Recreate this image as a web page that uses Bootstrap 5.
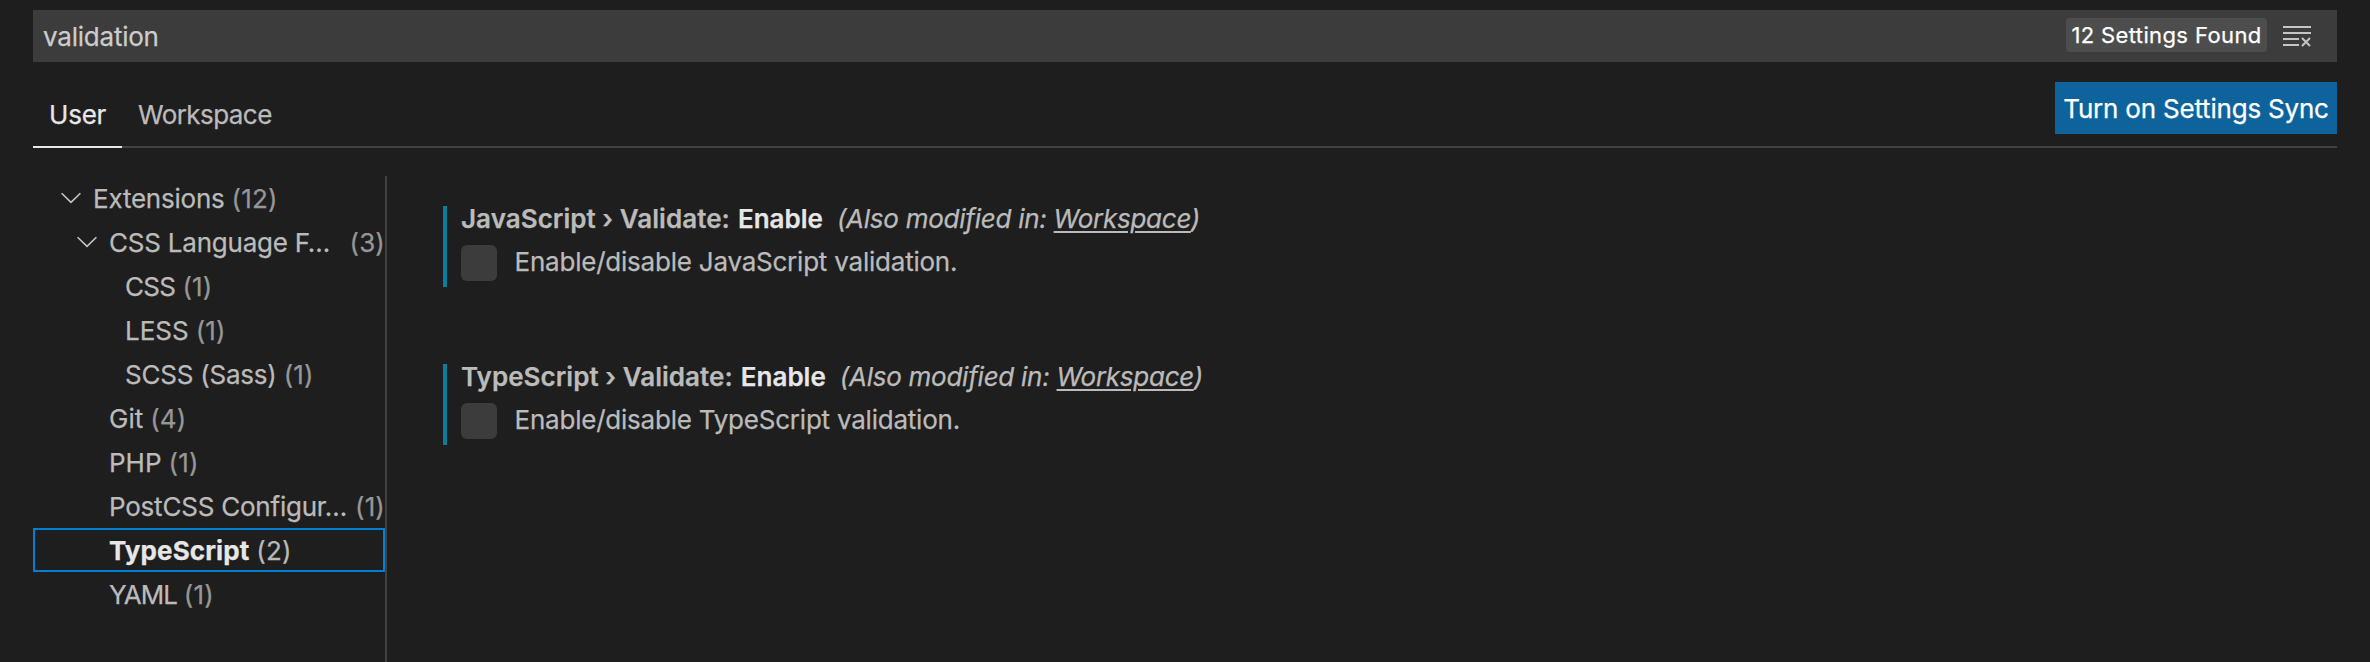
<!DOCTYPE html>
<html lang="en" data-bs-theme="dark">
<head>
<meta charset="utf-8">
<meta name="viewport" content="width=device-width, initial-scale=1">
<title>Settings</title>
<link href="https://cdn.jsdelivr.net/npm/bootstrap@5.3.0/dist/css/bootstrap.min.css" rel="stylesheet">
<style>
html,body{height:100%}
body{background:#1e1e1e;color:#bbb;font:26px/44px Inter,"Liberation Sans",sans-serif;letter-spacing:-.22px;overflow:hidden;-webkit-text-stroke:.25px currentColor}
.editor-page{padding:10px 33px 0}
.search-bar{height:52px;background:#3c3c3c;color:#ccc;padding:0 26px 0 10px}
.query{padding-top:2px}
.found-badge{height:34px;width:201px;margin:-2px 16px 0 0;background:#4d4d4d;color:#fff;border-radius:4px;font-size:22px;line-height:34px;letter-spacing:.38px}
.scope-row{height:86px;border-bottom:2px solid #414141}
.scope-tab{height:86px;line-height:44px;padding-top:31px;color:#bbb}
.scope-tab.active{color:#e7e7e7;width:89px;padding-left:16px;border-bottom:2px solid #e7e7e7}
.scope-tab.other{padding-left:16px;letter-spacing:-.57px}
.sync-btn{height:52px;width:282px;margin-top:20px;background:#0e639c;color:#fff;border-radius:0;padding:2px 0 0;font-size:26px;line-height:50px;border:0;letter-spacing:-.2px}
.sync-btn:hover{background:#1177bb;color:#fff}
.settings-body{height:514px}
.toc{width:354px;margin-top:28px;border-right:2px solid #414141}
.toc-row{height:44px;line-height:46px;padding-left:76px;white-space:nowrap}
.toc-row.root{padding-left:27px}
.toc-row.branch{padding-left:43px}
.toc-row.leaf{padding-left:92px}
.toc-row.selected{outline:2px solid #007fd4;outline-offset:-2px;color:#e7e7e7}
.toc-row.selected .toc-name{font-weight:700;letter-spacing:.1px}
.toc-count{margin-left:7px;color:#979797;letter-spacing:.15px}
.toc-row.selected .toc-count{color:#b9b9b9}
.toc-row.root .toc-name,.toc-row.root .toc-count,.toc-row.branch .toc-name,.toc-row.branch .toc-count{padding-top:2px}
.caps{letter-spacing:-.65px}
.caps-wide{letter-spacing:-1px}
.toc-name.short{letter-spacing:0}
.chev{width:22px;height:12px;margin:-1px 11px 0 0}
.setting-list{padding:58px 0 0 56px}
.setting{height:81px;margin-bottom:77px;border-left:4px solid #0c7d9d;padding-left:14px}
.setting-title{height:39px;line-height:26px;white-space:pre}
.setting-title b{font-weight:600;letter-spacing:.04px}
.setting-title b + b{color:#e7e7e7;margin-left:8px;letter-spacing:0}
.setting-title em{margin-left:14px;letter-spacing:-.26px}
.setting-title u{text-decoration-thickness:2px;text-underline-offset:3px}
.check-box{width:36px;height:36px;border-radius:6px;background:#3c3c3c;border:0;margin:0}
.setting-text{margin:-1px 0 0 17.500px;line-height:36px}
</style>
</head>
<body>
<main class="editor-page">
  <div class="search-bar d-flex align-items-center">
    <span class="query flex-grow-1">validation</span>
    <span class="found-badge text-center">12 Settings Found</span>
    <svg width="28" height="22" viewBox="0 0 28 22" fill="none" stroke="#c5c5c5" stroke-width="2" aria-label="Clear"><path d="M0 2h28M0 8h28M0 14h16M0 20h16"/><path d="M19 13l8 8M27 13l-8 8"/></svg>
  </div>
  <div class="scope-row d-flex">
    <div class="scope-tab active">User</div>
    <div class="scope-tab other">Workspace</div>
    <button class="sync-btn btn ms-auto">Turn on Settings Sync</button>
  </div>
  <div class="settings-body d-flex">
    <nav class="toc">
      <div class="toc-row root d-flex align-items-center"><svg class="chev" viewBox="0 0 22 12" fill="none" stroke="#c5c5c5" stroke-width="1.6"><path d="M1.600 1.200 11 10.400 20.400 1.200"/></svg><span class="toc-name">Extensions</span><span class="toc-count">(12)</span></div>
      <div class="toc-row branch d-flex align-items-center"><svg class="chev" viewBox="0 0 22 12" fill="none" stroke="#c5c5c5" stroke-width="1.6"><path d="M1.600 1.200 11 10.400 20.400 1.200"/></svg><span class="toc-name">CSS Language F…</span><span class="toc-count ms-auto">(3)</span></div>
      <div class="toc-row leaf d-flex"><span class="toc-name caps">CSS</span><span class="toc-count">(1)</span></div>
      <div class="toc-row leaf d-flex"><span class="toc-name short">LESS</span><span class="toc-count">(1)</span></div>
      <div class="toc-row leaf d-flex"><span class="toc-name">SCSS (Sass)</span><span class="toc-count">(1)</span></div>
      <div class="toc-row d-flex"><span class="toc-name short">Git</span><span class="toc-count">(4)</span></div>
      <div class="toc-row d-flex"><span class="toc-name short">PHP</span><span class="toc-count">(1)</span></div>
      <div class="toc-row d-flex"><span class="toc-name">PostCSS Configur…</span><span class="toc-count ms-auto">(1)</span></div>
      <div class="toc-row selected d-flex"><span class="toc-name">TypeScript</span><span class="toc-count">(2)</span></div>
      <div class="toc-row d-flex"><span class="toc-name caps-wide">YAML</span><span class="toc-count">(1)</span></div>
    </nav>
    <section class="setting-list flex-grow-1">
      <div class="setting">
        <div class="setting-title d-flex"><b>JavaScript › Validate:</b><b>Enable</b><em>(Also modified in: <u>Workspace</u>)</em></div>
        <label class="d-flex"><span class="check-box"></span><span class="setting-text">Enable/disable JavaScript validation.</span></label>
      </div>
      <div class="setting">
        <div class="setting-title d-flex"><b>TypeScript › Validate:</b><b>Enable</b><em>(Also modified in: <u>Workspace</u>)</em></div>
        <label class="d-flex"><span class="check-box"></span><span class="setting-text">Enable/disable TypeScript validation.</span></label>
      </div>
    </section>
  </div>
</main>
<script src="https://cdn.jsdelivr.net/npm/bootstrap@5.3.0/dist/js/bootstrap.bundle.min.js"></script>
</body>
</html>
